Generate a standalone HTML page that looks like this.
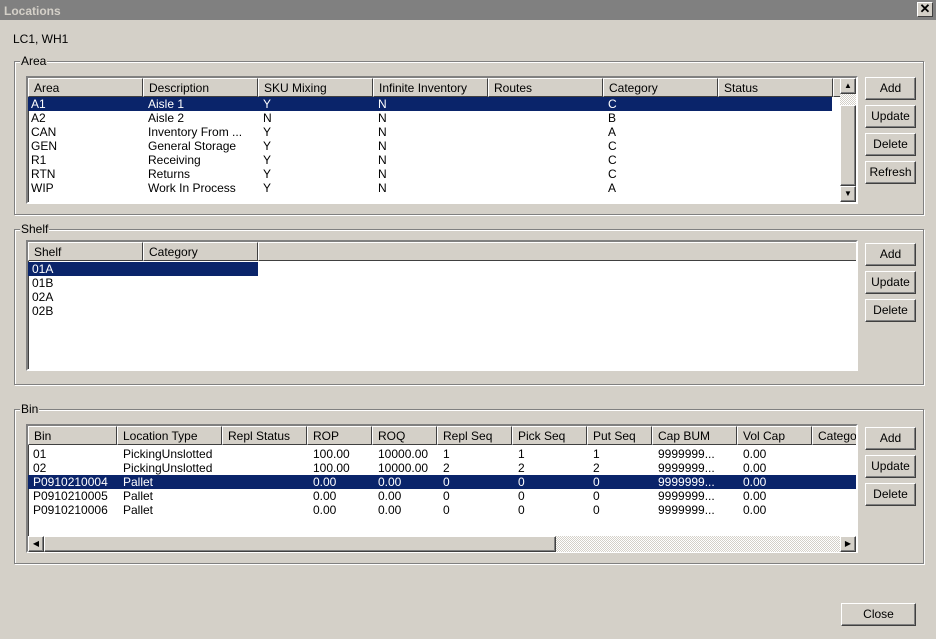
<!DOCTYPE html>
<html><head><meta charset="utf-8"><style>
*{box-sizing:border-box;margin:0;padding:0}
body{width:936px;height:639px;background:#d4d0c8;font-family:"Liberation Sans",sans-serif;font-size:12px;color:#000;position:relative;overflow:hidden}
.a{position:absolute}
.title{left:0;top:0;width:936px;height:20px;background:#808080;color:#d4d0c8;font-weight:bold;font-size:12px;padding:4px 0 0 4px}
.x{left:917px;top:2px;width:16px;height:15px;background:#d4d0c8;border:1px solid;border-color:#fff #404040 #404040 #fff;font-size:13px;font-weight:bold;line-height:12px;text-align:center;color:#000}
.grp{border:1px solid #808080;box-shadow:1px 1px 0 #fff,inset 1px 1px 0 #fff}
.lbl{background:#d4d0c8;padding:0 1px;height:12px;line-height:12px}
.list{background:#fff;border:2px solid;border-color:#808080 #fff #fff #808080;box-shadow:inset 1px 1px 0 #404040}
.hd{position:absolute;top:0;height:19px;background:#d4d0c8;border:1px solid;border-color:#fff #404040 #404040 #fff;padding:2px 0 0 5px;white-space:nowrap;overflow:hidden}
.row{position:absolute;height:14px;line-height:14px;white-space:pre}
.sel{background:#0a246a;color:#fff}
.c{position:absolute;top:0}
.btn{position:absolute;width:51px;height:23px;background:#d4d0c8;border:1px solid;border-color:#fff #404040 #404040 #fff;box-shadow:inset -1px -1px 0 #808080;text-align:center;line-height:21px}
.sb{position:absolute;background:#d4d0c8;border:1px solid;border-color:#fff #404040 #404040 #fff;box-shadow:inset -1px -1px 0 #808080}
.hatch{position:absolute;background-image:repeating-conic-gradient(#fff 0 25%,#d4d0c8 0 50%);background-size:2px 2px}
</style></head><body>
<div class="a title">Locations</div>
<div class="a x">✕</div>
<div class="a" style="left:13px;top:32px">LC1, WH1</div>

<!-- Area -->
<div class="a grp" style="left:14px;top:61px;width:910px;height:154px"></div>
<div class="a lbl" style="left:20px;top:55px">Area</div>
<div class="a list" style="left:26px;top:76px;width:832px;height:128px;overflow:hidden">
 <div class="hd" style="left:0;width:115px">Area</div>
 <div class="hd" style="left:115px;width:115px">Description</div>
 <div class="hd" style="left:230px;width:115px">SKU Mixing</div>
 <div class="hd" style="left:345px;width:115px">Infinite Inventory</div>
 <div class="hd" style="left:460px;width:115px">Routes</div>
 <div class="hd" style="left:575px;width:115px">Category</div>
 <div class="hd" style="left:690px;width:115px">Status</div>
 <div class="hd" style="left:805px;width:10px"></div>
</div>
<div class="a" style="left:0;top:0">
 <div class="row sel" style="left:28px;top:97px;width:804px"></div>
</div>
<div class="a" id="arows"></div>
<div class="a" style="left:0;top:0">
 <div class="row" style="left:31px;top:97px;color:#fff">A1</div><div class="row" style="left:148px;top:97px;color:#fff">Aisle 1</div><div class="row" style="left:263px;top:97px;color:#fff">Y</div><div class="row" style="left:378px;top:97px;color:#fff">N</div><div class="row" style="left:608px;top:97px;color:#fff">C</div>
 <div class="row" style="left:31px;top:111px">A2</div><div class="row" style="left:148px;top:111px">Aisle 2</div><div class="row" style="left:263px;top:111px">N</div><div class="row" style="left:378px;top:111px">N</div><div class="row" style="left:608px;top:111px">B</div>
 <div class="row" style="left:31px;top:125px">CAN</div><div class="row" style="left:148px;top:125px">Inventory From ...</div><div class="row" style="left:263px;top:125px">Y</div><div class="row" style="left:378px;top:125px">N</div><div class="row" style="left:608px;top:125px">A</div>
 <div class="row" style="left:31px;top:139px">GEN</div><div class="row" style="left:148px;top:139px">General Storage</div><div class="row" style="left:263px;top:139px">Y</div><div class="row" style="left:378px;top:139px">N</div><div class="row" style="left:608px;top:139px">C</div>
 <div class="row" style="left:31px;top:153px">R1</div><div class="row" style="left:148px;top:153px">Receiving</div><div class="row" style="left:263px;top:153px">Y</div><div class="row" style="left:378px;top:153px">N</div><div class="row" style="left:608px;top:153px">C</div>
 <div class="row" style="left:31px;top:167px">RTN</div><div class="row" style="left:148px;top:167px">Returns</div><div class="row" style="left:263px;top:167px">Y</div><div class="row" style="left:378px;top:167px">N</div><div class="row" style="left:608px;top:167px">C</div>
 <div class="row" style="left:31px;top:181px">WIP</div><div class="row" style="left:148px;top:181px">Work In Process</div><div class="row" style="left:263px;top:181px">Y</div><div class="row" style="left:378px;top:181px">N</div><div class="row" style="left:608px;top:181px">A</div>
</div>
<div class="hatch" style="left:840px;top:94px;width:16px;height:11px"></div>
<div class="sb" style="left:840px;top:78px;width:16px;height:16px;font-size:8px;text-align:center;line-height:13px">▲</div>
<div class="sb" style="left:840px;top:105px;width:16px;height:81px"></div>
<div class="sb" style="left:840px;top:186px;width:16px;height:16px;font-size:8px;text-align:center;line-height:13px">▼</div>
<div class="btn" style="left:865px;top:77px">Add</div>
<div class="btn" style="left:865px;top:105px">Update</div>
<div class="btn" style="left:865px;top:133px">Delete</div>
<div class="btn" style="left:865px;top:161px">Refresh</div>

<!-- Shelf -->
<div class="a grp" style="left:14px;top:229px;width:910px;height:156px"></div>
<div class="a lbl" style="left:20px;top:223px">Shelf</div>
<div class="a list" style="left:26px;top:240px;width:832px;height:131px;overflow:hidden">
 <div class="hd" style="left:0;width:115px">Shelf</div>
 <div class="hd" style="left:115px;width:115px">Category</div>
 <div class="hd" style="left:230px;width:600px"></div>
</div>
<div class="row sel" style="position:absolute;left:28px;top:262px;width:230px"></div>
<div class="row" style="position:absolute;left:32px;top:262px;color:#fff">01A</div>
<div class="row" style="position:absolute;left:32px;top:276px">01B</div>
<div class="row" style="position:absolute;left:32px;top:290px">02A</div>
<div class="row" style="position:absolute;left:32px;top:304px">02B</div>
<div class="btn" style="left:865px;top:243px">Add</div>
<div class="btn" style="left:865px;top:271px">Update</div>
<div class="btn" style="left:865px;top:299px">Delete</div>

<!-- Bin -->
<div class="a grp" style="left:14px;top:409px;width:910px;height:155px"></div>
<div class="a lbl" style="left:20px;top:403px">Bin</div>
<div class="a list" style="left:26px;top:424px;width:832px;height:129px;overflow:hidden">
 <div class="hd" style="left:0;width:89px">Bin</div>
 <div class="hd" style="left:89px;width:105px">Location Type</div>
 <div class="hd" style="left:194px;width:85px">Repl Status</div>
 <div class="hd" style="left:279px;width:65px">ROP</div>
 <div class="hd" style="left:344px;width:65px">ROQ</div>
 <div class="hd" style="left:409px;width:75px">Repl Seq</div>
 <div class="hd" style="left:484px;width:75px">Pick Seq</div>
 <div class="hd" style="left:559px;width:65px">Put Seq</div>
 <div class="hd" style="left:624px;width:85px">Cap BUM</div>
 <div class="hd" style="left:709px;width:75px">Vol Cap</div>
 <div class="hd" style="left:784px;width:60px">Category</div>
</div>
<div class="row sel" style="position:absolute;left:28px;top:475px;width:828px"></div>
<div class="a" style="left:0;top:447px">
 <div class="row" style="left:33px;top:0">01</div><div class="row" style="left:123px;top:0">PickingUnslotted</div><div class="row" style="left:313px;top:0">100.00</div><div class="row" style="left:378px;top:0">10000.00</div><div class="row" style="left:443px;top:0">1</div><div class="row" style="left:518px;top:0">1</div><div class="row" style="left:593px;top:0">1</div><div class="row" style="left:658px;top:0">9999999...</div><div class="row" style="left:743px;top:0">0.00</div>
 <div class="row" style="left:33px;top:14px">02</div><div class="row" style="left:123px;top:14px">PickingUnslotted</div><div class="row" style="left:313px;top:14px">100.00</div><div class="row" style="left:378px;top:14px">10000.00</div><div class="row" style="left:443px;top:14px">2</div><div class="row" style="left:518px;top:14px">2</div><div class="row" style="left:593px;top:14px">2</div><div class="row" style="left:658px;top:14px">9999999...</div><div class="row" style="left:743px;top:14px">0.00</div>
 <div style="color:#fff"><div class="row" style="left:33px;top:28px">P0910210004</div><div class="row" style="left:123px;top:28px">Pallet</div><div class="row" style="left:313px;top:28px">0.00</div><div class="row" style="left:378px;top:28px">0.00</div><div class="row" style="left:443px;top:28px">0</div><div class="row" style="left:518px;top:28px">0</div><div class="row" style="left:593px;top:28px">0</div><div class="row" style="left:658px;top:28px">9999999...</div><div class="row" style="left:743px;top:28px">0.00</div></div>
 <div class="row" style="left:33px;top:42px">P0910210005</div><div class="row" style="left:123px;top:42px">Pallet</div><div class="row" style="left:313px;top:42px">0.00</div><div class="row" style="left:378px;top:42px">0.00</div><div class="row" style="left:443px;top:42px">0</div><div class="row" style="left:518px;top:42px">0</div><div class="row" style="left:593px;top:42px">0</div><div class="row" style="left:658px;top:42px">9999999...</div><div class="row" style="left:743px;top:42px">0.00</div>
 <div class="row" style="left:33px;top:56px">P0910210006</div><div class="row" style="left:123px;top:56px">Pallet</div><div class="row" style="left:313px;top:56px">0.00</div><div class="row" style="left:378px;top:56px">0.00</div><div class="row" style="left:443px;top:56px">0</div><div class="row" style="left:518px;top:56px">0</div><div class="row" style="left:593px;top:56px">0</div><div class="row" style="left:658px;top:56px">9999999...</div><div class="row" style="left:743px;top:56px">0.00</div>
</div>
<div class="hatch" style="left:556px;top:536px;width:284px;height:16px"></div>
<div class="sb" style="left:28px;top:536px;width:16px;height:16px;font-size:8px;text-align:center;line-height:13px">◀</div>
<div class="sb" style="left:44px;top:536px;width:512px;height:16px"></div>
<div class="sb" style="left:840px;top:536px;width:16px;height:16px;font-size:8px;text-align:center;line-height:13px">▶</div>
<div class="btn" style="left:865px;top:427px">Add</div>
<div class="btn" style="left:865px;top:455px">Update</div>
<div class="btn" style="left:865px;top:483px">Delete</div>

<div class="btn" style="left:841px;top:603px;width:75px">Close</div>
</body></html>
